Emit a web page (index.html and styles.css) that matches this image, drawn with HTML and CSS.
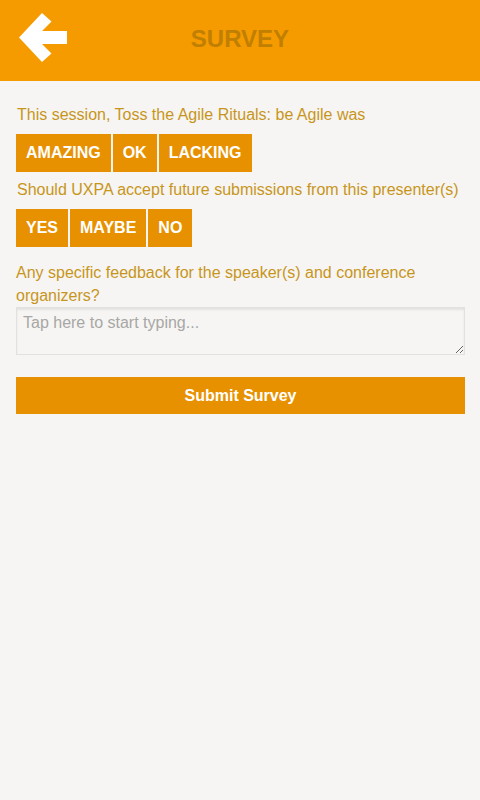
FILE: index.html
```html
<!DOCTYPE html>
<html lang="en">
<head>
    <meta charset="UTF-8">
    <meta name="viewport" content="width=device-width, initial-scale=1.0">
    <title>Survey</title>
    <link rel="stylesheet" href="styles.css">
</head>
<body>
    <header class="topbar">
        <a class="back" href="#">
            <svg width="48" height="50" viewBox="19 13 48 50">
                <polygon points="19,37.5 42,13 51.5,21.5 42,31 67,31 67,44 42,44 51.5,53.5 42,62" fill="#fff"/>
            </svg>
        </a>
        <h1>SURVEY</h1>
    </header>

    <main class="survey">
        <p class="question">This session, Toss the Agile Rituals: be Agile was</p>
        <div class="choices">
            <button>AMAZING</button>
            <button>OK</button>
            <button>LACKING</button>
        </div>

        <p class="question">Should UXPA accept future submissions from this presenter(s)</p>
        <div class="choices">
            <button>YES</button>
            <button>MAYBE</button>
            <button>NO</button>
        </div>

        <p class="question question-feedback">Any specific feedback for the speaker(s) and conference organizers?</p>
        <textarea class="feedback" placeholder="Tap here to start typing..."></textarea>

        <button class="submit">Submit Survey</button>
    </main>
</body>
</html>
```

FILE: styles.css
```css
* {
    margin: 0;
    padding: 0;
    box-sizing: border-box;
}

body {
    font-family: 'Liberation Sans', Arial, sans-serif;
    background: #f6f5f3;
    min-height: 100vh;
}

.topbar {
    position: relative;
    height: 81px;
    background: #f59b00;
    display: flex;
    align-items: center;
    justify-content: center;
}

.back {
    position: absolute;
    left: 19px;
    top: 13px;
    display: block;
    line-height: 0;
}

.topbar h1 {
    font-size: 24px;
    font-weight: bold;
    color: #c07f00;
    margin-top: -4px;
}

.survey {
    padding: 22px 15px 0 16px;
}

.question {
    font-size: 16px;
    line-height: 23px;
    color: #c8951c;
    margin-bottom: 8px;
    padding-left: 1px;
}

.question-feedback {
    margin-top: 14px;
    margin-bottom: 0;
    padding-left: 0;
}

.choices {
    display: flex;
    gap: 2px;
    margin-bottom: 6px;
}

.choices button {
    height: 38px;
    padding: 0 10px;
    font-family: inherit;
    font-size: 16px;
    font-weight: bold;
    color: #fff;
    background: #e89100;
    border: none;
    cursor: pointer;
}

.feedback {
    display: block;
    width: 100%;
    height: 48px;
    padding: 6px;
    font-family: inherit;
    font-size: 16px;
    color: #555;
    background: #f6f5f3;
    border: 1px solid #e2e1df;
    box-shadow: inset 0 2px 2px rgba(0, 0, 0, 0.08);
}

.feedback::placeholder {
    color: #a8a7a5;
}

.submit {
    display: block;
    width: 100%;
    height: 37px;
    margin-top: 22px;
    font-family: inherit;
    font-size: 16px;
    font-weight: bold;
    color: #fff;
    background: #e89100;
    border: none;
    cursor: pointer;
}
```
